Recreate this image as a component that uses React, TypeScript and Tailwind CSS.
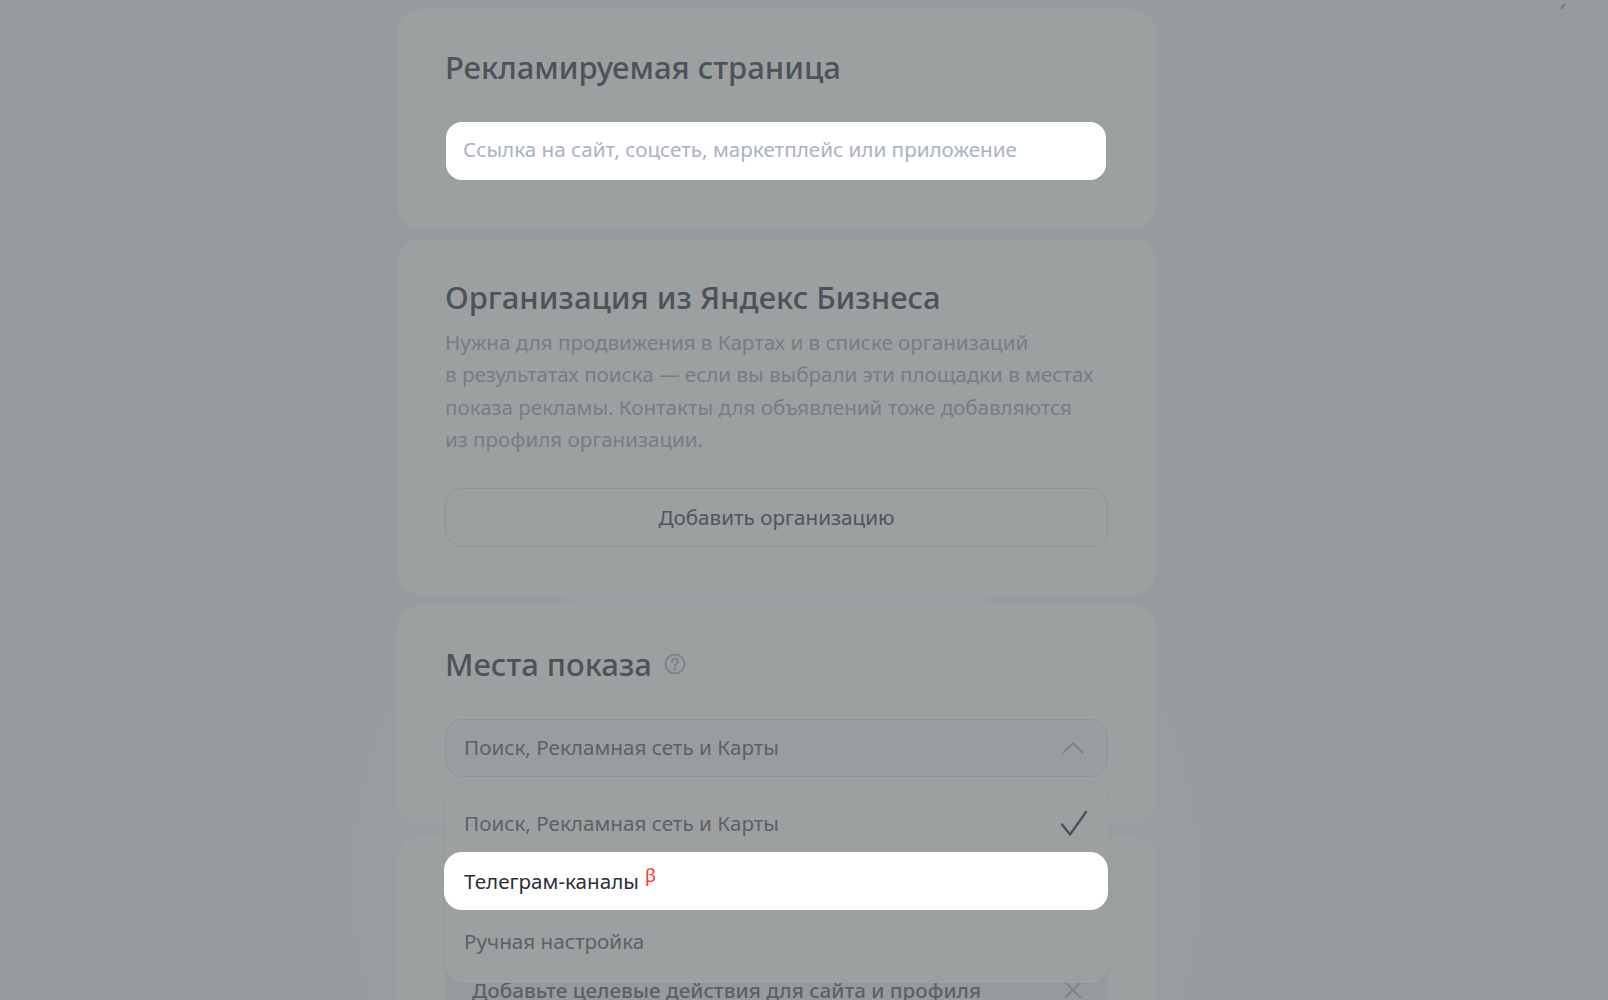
import { X } from 'lucide-react';

const OPTIONS = ['Поиск, Рекламная сеть и Карты', 'Телеграм-каналы', 'Ручная настройка'];

function Heading({ children }: { children: React.ReactNode }) {
  return <h2 className="text-[31px] leading-[40px] font-medium text-[#4d5359]">{children}</h2>;
}

// Выпадающий список мест показа
function PlacementMenu() {
  return (
    <div className="absolute left-[48px] top-[179px] z-10 w-[663px] rounded-[18px] bg-[#9ca0a1] pt-[10px] pb-[15px] shadow-[0_0_4px_rgba(90,95,100,0.12)]">
      <div className="flex h-[58px] items-center justify-between pl-[19px] pr-[20px] text-[20.65px] text-[#5c6166]">
        <span>{OPTIONS[0]}</span>
        <svg width="28" height="27" viewBox="0 0 28 27" fill="none" stroke="#4d5359" strokeWidth="2.4" strokeLinecap="round" strokeLinejoin="round">
          <path d="M2 14.5 L10 24.5 L26 2" />
        </svg>
      </div>
      <div className="-ml-[1px] flex h-[58px] items-center rounded-[18px] bg-white pl-[20px] text-[20.65px] text-[#2b2f3b]">
        <span>{OPTIONS[1]}</span>
        <sup className="ml-[6px] translate-y-[3px] text-[18px] text-[#ff3333]">β</sup>
      </div>
      <div className="flex h-[58px] items-center pt-[4px] pl-[19px] text-[20.65px] text-[#5c6166]">{OPTIONS[2]}</div>
    </div>
  );
}

export default function App() {
  return (
    <div className="h-screen overflow-hidden bg-[#969b9e] bg-[radial-gradient(circle_at_776px_880px,#9a9fa1_0,#9a9fa1_300px,#969b9e_480px)] pt-[9px] font-['Noto_Sans',sans-serif]">
      <div className="relative ml-[397px] flex w-[759px] flex-col gap-[10px]">
        <section className="h-[220px] rounded-[24px] bg-[#9ca0a1] px-[48px] pt-[38px]">
          <Heading>Рекламируемая страница</Heading>
          <div className="mt-[35px] ml-[1px] flex h-[58px] w-[660px] items-center rounded-[16px] bg-white pb-[3px] pl-[17px] text-[20.65px] text-[#a9b2c4]">
            Ссылка на сайт, соцсеть, маркетплейс или приложение
          </div>
        </section>

        <section className="h-[356px] rounded-[24px] bg-[#9ca0a1] px-[48px] pt-[38px]">
          <Heading>Организация из Яндекс Бизнеса</Heading>
          <p className="mt-[9px] text-[20.65px] leading-[32.33px] tracking-[-0.05px] whitespace-nowrap text-[#777d82]">
            Нужна для продвижения в Картах и в списке организаций
            <br />в результатах поиска — если вы выбрали эти площадки в местах
            <br />показа рекламы. Контакты для объявлений тоже добавляются
            <br />из профиля организации.
          </p>
          <div className="mt-[33px] flex h-[59px] items-center justify-center rounded-[18px] border border-[#8f9498] pb-[1px] text-[20.65px] text-[#50555b]">
            Добавить организацию
          </div>
        </section>

        <section className="relative h-[221px] rounded-[24px] bg-[#9ca0a1] px-[48px] pt-[39px]">
          <div className="flex items-center gap-[12px]">
            <Heading>Места показа</Heading>
            <svg width="22" height="22" viewBox="0 0 22 22" fill="none" stroke="#7d8389" strokeWidth="2">
              <circle cx="11" cy="11" r="9.5" />
              <path d="M8 8.8a3 3 0 0 1 6 0c0 2-3 2.2-3 4.2" strokeLinecap="round" />
              <circle cx="11" cy="16" r="0.6" />
            </svg>
          </div>
          <div className="mt-[35px] flex h-[58px] items-center justify-between rounded-[18px] border border-[#8f9498] bg-[#999da0] pb-[1px] pl-[18px] pr-[23px] text-[20.65px] text-[#5c6166]">
            <span>{OPTIONS[0]}</span>
            <svg width="22" height="13" viewBox="0 0 22 13" fill="none" stroke="#7d8389" strokeWidth="2" strokeLinecap="round" strokeLinejoin="round">
              <path d="M1.5 11.5 L11 2 L20.5 11.5" />
            </svg>
          </div>
          <PlacementMenu />
        </section>

        <section className="h-[200px] rounded-[24px] bg-[#9ca0a1] px-[48px] pt-[125px]">
          <div className="flex h-[58px] items-center justify-between rounded-[16px] bg-[#969b9e] pl-[27px] pr-[20px] text-[20.65px] font-medium text-[#5c6166]">
            <span>Добавьте целевые действия для сайта и профиля</span>
            <X size={30} strokeWidth={1.5} className="text-[#7d8389]" />
          </div>
        </section>
      </div>

      <svg className="absolute left-[1558px] top-[2px]" width="10" height="10" viewBox="0 0 10 10" fill="none" stroke="#6f7479" strokeWidth="1.5">
        <path d="M7 2.5C5 3 4 4.5 3.5 7" strokeLinecap="round" />
      </svg>
    </div>
  );
}
